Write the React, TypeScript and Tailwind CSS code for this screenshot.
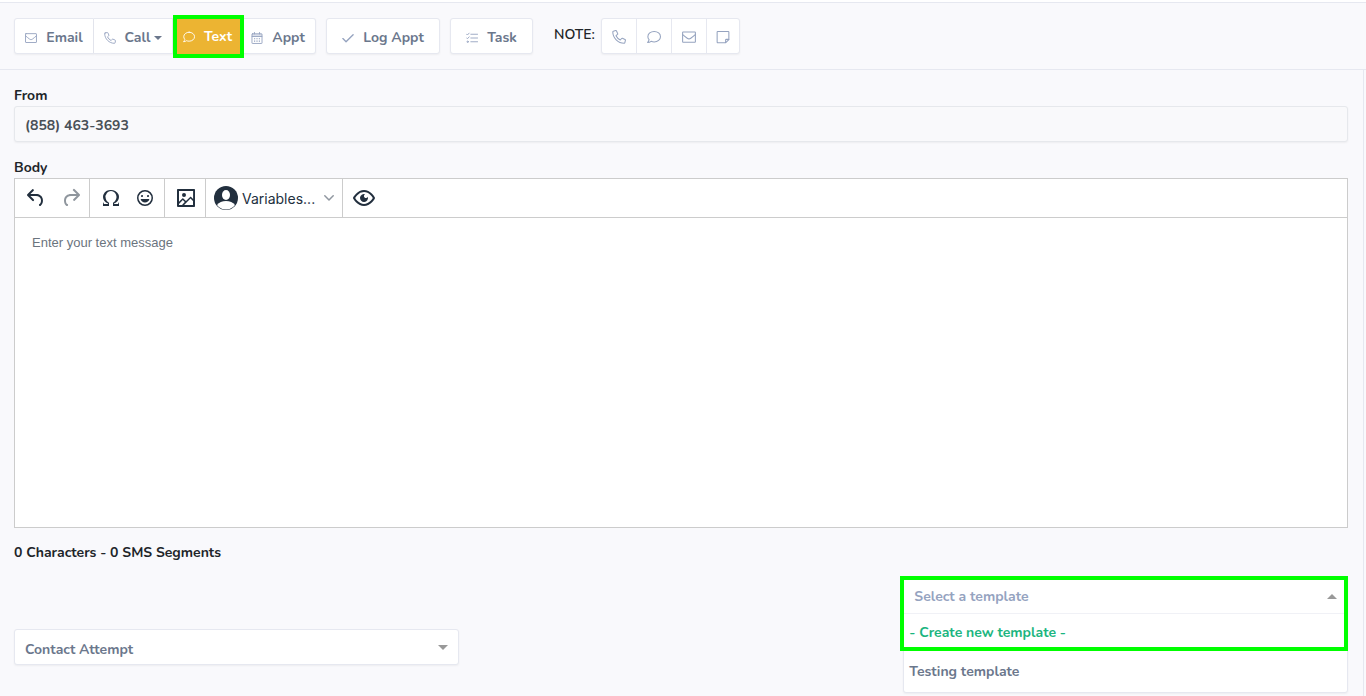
import { useState } from "react";
import type { ReactNode } from "react";
import clsx from "clsx";

const TEMPLATES = ["Testing template"];

function LineIcon({ children, className = "size-3" }: { children: ReactNode; className?: string }) {
  return (
    <svg
      viewBox="0 0 16 16"
      className={clsx("shrink-0", className)}
      fill="none"
      stroke="currentColor"
      strokeWidth="1.2"
      strokeLinecap="round"
      strokeLinejoin="round"
      aria-hidden="true"
    >
      {children}
    </svg>
  );
}

function EnvelopeIcon({ className }: { className?: string }) {
  return (
    <LineIcon className={className}>
      <rect x="0.7" y="2.2" width="14.6" height="11.8" rx="0.6" />
      <path d="M0.8 5.2c2 1.700 3.600 3 5.200 4.200 1.300 1 2.700 1 4 0 1.600-1.200 3.200-2.500 5.200-4.200" />
    </LineIcon>
  );
}

function PhoneIcon({ className }: { className?: string }) {
  return (
    <LineIcon className={className}>
      <path d="M1.500 1.300 4.300 0.650c0.350-0.080 0.700 0.100 0.850 0.430l1.350 3.100c0.130 0.300 0.040 0.650-0.200 0.870L4.600 6.500c1 2.100 2.700 3.850 4.900 4.900l1.450-1.700c0.220-0.260 0.570-0.340 0.870-0.210l3.100 1.350c0.330 0.150 0.510 0.500 0.430 0.850l-0.650 2.800c-0.080 0.350-0.370 0.600-0.730 0.600C6.900 15.100 0.900 9.100 0.900 2.030c0-0.350 0.250-0.650 0.600-0.730z" />
    </LineIcon>
  );
}

function ChatIcon({ className }: { className?: string }) {
  return (
    <LineIcon className={className}>
      <path d="M8.200 1.600c4 0 7.200 2.700 7.200 6s-3.200 6-7.200 6c-1.300 0-2.500-0.300-3.500-0.700-1 0.800-2.400 1.400-4 1.400 0.900-1 1.500-2.200 1.700-3.200C1.500 10.100 1 8.900 1 7.600c0-3.300 3.200-6 7.200-6z" />
    </LineIcon>
  );
}

function CalendarIcon() {
  return (
    <LineIcon className="size-3">
      <path d="M1.300 2.400h13.400V6H1.300z" fill="currentColor" fillOpacity="0.35" stroke="none" />
      <rect x="1.300" y="2.400" width="13.400" height="12.900" rx="0.600" />
      <path d="M1.500 6h13M4.600 0.600v2M11.400 0.600v2" />
      <path d="M4 9h1.600M7.200 9h1.600M10.400 9H12M4 12.200h1.600M7.200 12.200h1.600M10.400 12.200H12" strokeWidth="1.500" strokeLinecap="butt" />
    </LineIcon>
  );
}

function CheckIcon() {
  return (
    <LineIcon className="size-3">
      <path d="M1.200 8.800 5.400 13 14.800 3.600" strokeWidth="1.800" />
    </LineIcon>
  );
}

function TasksIcon() {
  return (
    <LineIcon className="size-3">
      <path d="M6.400 3h9M6.400 8h9M6.400 13h9" />
      <path d="M0.700 2.800 1.900 4 4.200 1.500M0.700 7.800 1.900 9 4.200 6.500" />
      <circle cx="2.200" cy="13" r="0.900" />
    </LineIcon>
  );
}

function NoteIcon() {
  return (
    <LineIcon className="size-3.5">
      <path d="M2 1.600h12c0.400 0 0.700 0.300 0.700 0.700v8.600l-3.600 3.600H2c-0.400 0-0.700-0.300-0.700-0.700V2.300c0-0.400 0.300-0.700 0.700-0.700z" />
      <path d="M11 14.300v-2.900c0-0.400 0.300-0.700 0.700-0.700h2.900" />
    </LineIcon>
  );
}

function EditorIcon({ d }: { d: string }) {
  return (
    <svg viewBox="0 0 24 24" className="size-6" fill="currentColor" fillRule="evenodd" aria-hidden="true">
      <path d={d} />
    </svg>
  );
}

const UNDO =
  "M6.400 8H12c3.700 0 6.200 2 6.800 5.100.6 2.700-.4 5.600-2.300 6.800a1 1 0 0 1-1-1.800c1.100-.6 1.800-2.700 1.400-4.600-.5-2.100-2.100-3.500-4.900-3.500H6.400l3.300 3.300a1 1 0 1 1-1.400 1.400l-5-5a1 1 0 0 1 0-1.400l5-5a1 1 0 0 1 1.400 1.400L6.400 8z";
const REDO =
  "M17.600 10H12c-2.800 0-4.400 1.400-4.900 3.500-.4 2 .3 4 1.400 4.600a1 1 0 1 1-1 1.800c-2-1.200-2.900-4.100-2.300-6.800.6-3 3-5.100 6.800-5.100h5.600l-3.300-3.300a1 1 0 1 1 1.400-1.400l5 5a1 1 0 0 1 0 1.400l-5 5a1 1 0 0 1-1.400-1.400l3.300-3.300z";
const OMEGA =
  "M15 18h4l1-2v4h-6v-3.300l1.400-1a6 6 0 0 0 1.800-2.900 6.300 6.300 0 0 0-.1-4.100 5.800 5.800 0 0 0-3-3.200c-.6-.3-1.300-.5-2.100-.5a5.100 5.100 0 0 0-3.900 1.800 6.300 6.300 0 0 0-1.300 6 6.200 6.200 0 0 0 1.800 3l1.400.9V20H4v-4l1 2h4v-.5l-2-1L5.400 15A6.500 6.500 0 0 1 4 11c0-1 .2-1.900.6-2.700A7 7 0 0 1 7.800 4.800 9 9 0 0 1 12 4c1.500 0 2.900.3 4.200.900a7 7 0 0 1 3.200 3.400c.4.800.6 1.700.6 2.700a6.500 6.500 0 0 1-1.400 4L17 16.500l-2 1v.5z";
const EMOJI =
  "M9 11c.6 0 1-.4 1-1s-.4-1-1-1a1 1 0 0 0-1 1c0 .6.4 1 1 1zm6 0c.6 0 1-.4 1-1s-.4-1-1-1a1 1 0 0 0-1 1c0 .6.4 1 1 1zm-3 5.500c2.100 0 4-1.500 4.400-3.500H7.600c.5 2 2.300 3.500 4.400 3.500zM12 4a8 8 0 1 0 0 16 8 8 0 0 0 0-16zm0 14.500a6.500 6.500 0 1 1 0-13 6.500 6.500 0 0 1 0 13z";
const IMAGE =
  "M5 15.700l3.300-3.200c.3-.3.7-.3 1 0L12 15l4.100-4c.3-.4.8-.4 1 0l2 1.900V5H5v10.700zM5 18V19h3l2.800-2.900-2-2L5 17.900zm14-3l-2.500-2.400-6.400 6.500H19v-4zM4 3h16c.6 0 1 .4 1 1v16c0 .6-.4 1-1 1H4a1 1 0 0 1-1-1V4c0-.6.4-1 1-1zm6 8a2 2 0 1 0 0-4 2 2 0 0 0 0 4z";
const PREVIEW =
  "M3.500 12.500c.5.8 1.100 1.600 1.800 2.300 2 2 4.200 3.200 6.700 3.200s4.700-1.200 6.700-3.200a16.200 16.200 0 0 0 2.100-2.800 15.700 15.700 0 0 0-2.100-2.800c-2-2-4.200-3.200-6.700-3.200a9.300 9.300 0 0 0-6.700 3.200A16.200 16.200 0 0 0 3.200 12c0 .2.2.3.3.5zm-2.400-1l.7-1.200L4 7.800C6.200 5.400 8.900 4 12 4c3 0 5.800 1.400 8.100 3.800a18.200 18.200 0 0 1 2.800 3.700v1l-.7 1.200a18.200 18.200 0 0 1-2.100 2.500c-2.300 2.400-5 3.800-8.100 3.800-3 0-5.800-1.400-8.100-3.800a18.200 18.200 0 0 1-2.800-3.700 1 1 0 0 1 0-1zm12-3.300a2 2 0 1 0 2.700 2.600 4 4 0 1 1-2.600-2.600z";

function AvatarIcon() {
  return (
    <svg viewBox="0 0 24 24" className="size-6 shrink-0" aria-hidden="true">
      <circle cx="12" cy="12" r="12" fill="#222f3e" />
      <ellipse cx="12" cy="9" rx="4" ry="5" fill="#fff" />
      <path d="M3 19c2-2.900 5.200-4 9-4s7 1.100 9 4a11.200 11.200 0 0 1-18 0z" fill="#fff" />
    </svg>
  );
}

function Caret({ up = false, className }: { up?: boolean; className?: string }) {
  return (
    <svg viewBox="0 0 10 5" className={clsx("shrink-0", className)} fill="currentColor" aria-hidden="true">
      <path d={up ? "M0 5 5 0l5 5z" : "M0 0h10L5 5z"} />
    </svg>
  );
}

const actionButton =
  "flex h-9 items-center justify-center gap-[9px] border border-[#e6e8f0] bg-white pt-[3px] text-[#6b778c] shadow-xs";

function ActionButton({ icon, label, className }: { icon: ReactNode; label: string; className?: string }) {
  return (
    <button type="button" className={clsx(actionButton, className)}>
      <span className="text-[#95a3bf]">{icon}</span>
      {label}
    </button>
  );
}

function ToolButton({ label, d, className, disabled }: { label: string; d: string; className?: string; disabled?: boolean }) {
  return (
    <button
      type="button"
      aria-label={label}
      disabled={disabled}
      className={clsx("flex h-full items-center justify-center disabled:opacity-50", className)}
    >
      <EditorIcon d={d} />
    </button>
  );
}

export default function App() {
  const [body, setBody] = useState("");
  const [open, setOpen] = useState(true);
  const [template, setTemplate] = useState("");

  const segments = Math.ceil(body.length / 160);

  const pick = (name: string) => {
    setTemplate(name);
    setOpen(false);
  };

  return (
    <div className="flex min-h-screen flex-col border-t-2 border-white bg-[#f9f9fc] font-['Nunito','Lato',sans-serif] text-[14px] leading-5 font-bold text-[#212529]">
      <header className="flex items-center border-y border-[#e6e8f0] px-[14px] py-[15px]">
        <div className="flex">
          <ActionButton icon={<EnvelopeIcon />} label="Email" className="w-20 rounded-l-[3px]" />
          <button type="button" className={clsx(actionButton, "w-[79px] border-l-0")}>
            <PhoneIcon className="size-3 text-[#95a3bf]" />
            <span className="flex items-center gap-1">
              Call
              <Caret className="w-2" />
            </span>
          </button>
          <button type="button" className="relative flex h-9 w-[71px] items-center justify-center gap-[9px] bg-[#ecb432] pt-[2px] pr-[2px] text-white">
            <ChatIcon />
            Text
            <span className="pointer-events-none absolute inset-x-0 -top-[3px] -bottom-1 border-4 border-[#00ff00]" />
          </button>
          <ActionButton icon={<CalendarIcon />} label="Appt" className="w-[72px] rounded-r-[3px] border-l-0 pr-[3px]" />
        </div>
        <ActionButton icon={<CheckIcon />} label="Log Appt" className="ml-[10px] w-[114px] rounded-[3px]" />
        <ActionButton icon={<TasksIcon />} label="Task" className="ml-[10px] w-[83px] rounded-[3px]" />
        <span className="ml-[21px] w-[47px] pb-[2px] font-semibold">NOTE:</span>
        <div className="flex divide-x divide-[#e6e8f0] rounded-[3px] border border-[#e6e8f0] bg-white text-[#95a3bf] shadow-xs">
          <button type="button" aria-label="Call note" className="flex h-[34px] w-[35px] items-center justify-center pt-[2px]">
            <PhoneIcon className="size-3.5" />
          </button>
          <button type="button" aria-label="Text note" className="flex h-[34px] w-[35px] items-center justify-center pt-[2px]">
            <ChatIcon className="size-3.5" />
          </button>
          <button type="button" aria-label="Email note" className="flex h-[34px] w-[35px] items-center justify-center pt-[2px]">
            <EnvelopeIcon className="size-3.5" />
          </button>
          <button type="button" aria-label="Note" className="flex h-[34px] w-8 items-center justify-center pt-[2px]">
            <NoteIcon />
          </button>
        </div>
      </header>

      <main className="mr-[2px] flex-1 border-r border-[#e6e8f0] pt-4 pr-[15px] pl-[14px]">
        <label htmlFor="from" className="block">
          From
        </label>
        <input
          id="from"
          readOnly
          value="(858) 463-3693"
          className="block h-9 w-full rounded-[3px] border border-[#e6e8ec] bg-[#f9f9fb] px-[10px] pt-[2px] text-[#495057] shadow-xs outline-none"
        />

        <label htmlFor="body" className="mt-4 block">
          Body
        </label>
        <div className="flex h-[350px] flex-col border border-[#ccc] bg-white">
          <div className="flex h-[39px] shrink-0 border-b border-[#ccc] text-[#222f3e]">
            <div className="flex w-[75px] border-r border-[#ccc] pl-[3px]">
              <ToolButton label="Undo" d={UNDO} className="w-[35px]" />
              <ToolButton label="Redo" d={REDO} className="w-[35px]" disabled />
            </div>
            <div className="flex w-[75px] border-r border-[#ccc] pl-1">
              <ToolButton label="Special character" d={OMEGA} className="w-[34px]" />
              <ToolButton label="Emojis" d={EMOJI} className="w-[34px]" />
            </div>
            <div className="flex w-[41px] border-r border-[#ccc] pl-1">
              <ToolButton label="Insert image" d={IMAGE} className="w-[34px]" />
            </div>
            <div className="flex w-[137px] border-r border-[#ccc]">
              <button type="button" className="flex w-full items-center gap-1 px-2 font-['Inter',sans-serif] font-normal">
                <AvatarIcon />
                <span className="pt-[2px]">Variables...</span>
                <svg viewBox="0 0 10 6" className="ml-auto w-[10px] text-[#9097a0]" fill="none" stroke="currentColor" strokeWidth="1.500" strokeLinecap="round" strokeLinejoin="round" aria-hidden="true">
                  <path d="M0.800 0.800 5 5 9.200 0.800" />
                </svg>
              </button>
            </div>
            <ToolButton label="Preview" d={PREVIEW} className="w-[42px]" />
          </div>
          <textarea
            id="body"
            value={body}
            onChange={(e) => setBody(e.target.value)}
            placeholder="Enter your text message"
            className="block w-full flex-1 resize-none px-[17px] py-[15px] font-['Liberation_Sans',sans-serif] text-[13px] font-normal outline-none placeholder:text-[#6b747e]"
          />
        </div>

        <p className="mt-[13px] leading-6">
          {body.length} Characters - {segments} SMS Segments
        </p>

        <div className="mt-[11px] grid grid-cols-3 items-start">
          <div className="relative mt-[53px]">
            <select
              aria-label="Activity type"
              className="block h-9 w-full appearance-none rounded-[3px] border border-[#e6e8f0] bg-white px-[10px] pt-[5px] text-[#6b778c] shadow-xs outline-none"
            >
              <option>Contact Attempt</option>
            </select>
            <Caret className="pointer-events-none absolute top-4 right-[11px] w-[10px] text-[#999]" />
          </div>

          <div className="relative col-start-3 rounded-[3px] border border-[#e6e8f0] bg-white shadow-xs">
            <button
              type="button"
              aria-haspopup="listbox"
              aria-expanded={open}
              onClick={() => setOpen(!open)}
              className="flex h-[37px] w-full items-center justify-between border-b border-[#f0f1f6] px-[10px] pt-[3px] text-[#95a3bf]"
            >
              {template || "Select a template"}
              <Caret up={open} className="w-[10px] text-[#999]" />
            </button>
            {open && (
              <ul role="listbox" aria-label="Templates">
                <li role="option" aria-selected={false} onClick={() => pick("")} className="flex h-[37px] items-center px-[5px] text-[#1bb580]">
                  - Create new template -
                </li>
                {TEMPLATES.map((name) => (
                  <li
                    key={name}
                    role="option"
                    aria-selected={template === name}
                    onClick={() => pick(name)}
                    className="flex h-[41px] items-center px-[5px] text-[#6b778c]"
                  >
                    {name}
                  </li>
                ))}
              </ul>
            )}
            <span className="pointer-events-none absolute -top-px -right-px -left-1 h-[75px] border-4 border-[#00ff00]" />
          </div>
        </div>
      </main>
    </div>
  );
}
